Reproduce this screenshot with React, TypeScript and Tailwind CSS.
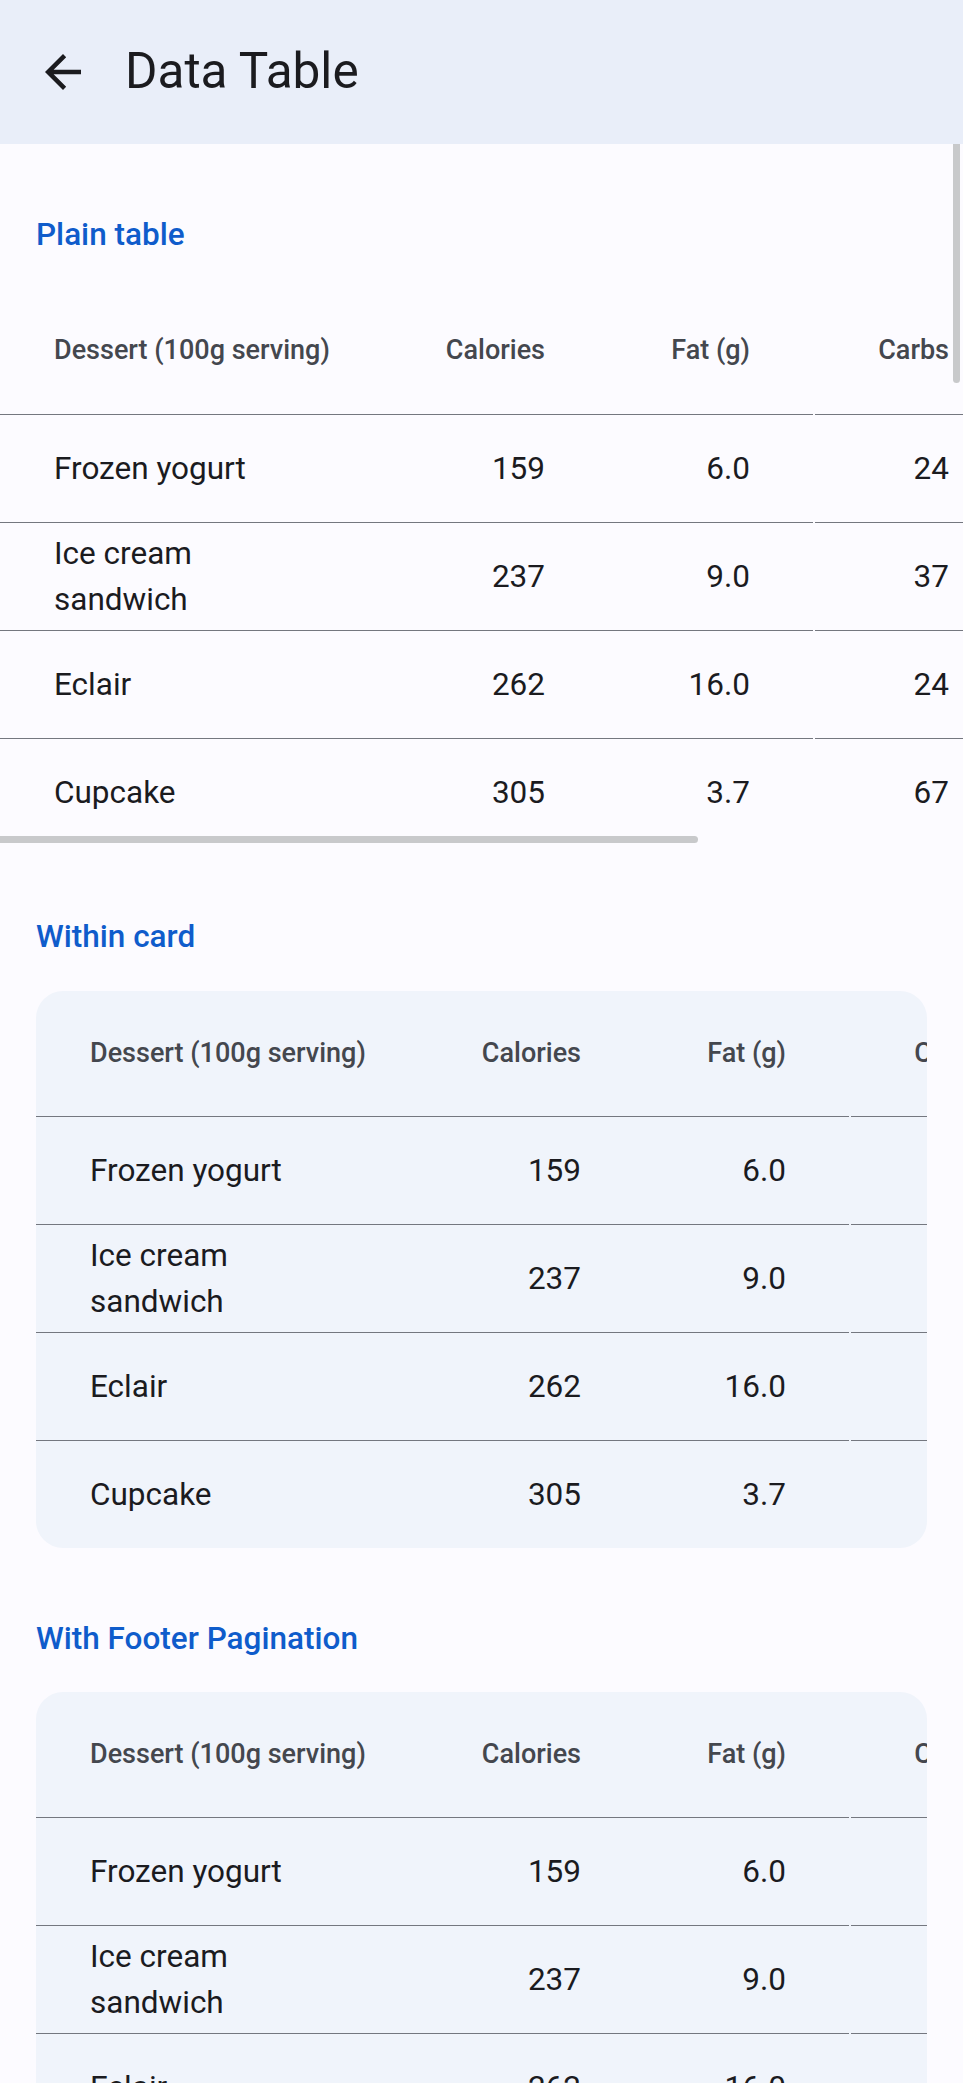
import React from "react";

// デザートのデータ
interface Dessert {
  name: string;
  calories: number;
  fat: string;
  carbs: number;
  protein: string;
}

const desserts: Dessert[] = [
  { name: "Frozen yogurt", calories: 159, fat: "6.0", carbs: 24, protein: "4.0" },
  { name: "Ice cream sandwich", calories: 237, fat: "9.0", carbs: 37, protein: "4.3" },
  { name: "Eclair", calories: 262, fat: "16.0", carbs: 24, protein: "6.0" },
  { name: "Cupcake", calories: 305, fat: "3.7", carbs: 67, protein: "4.3" },
];

// 列ごとのセル幅・余白
const cell = [
  "w-[392px] pl-[54px] pr-[63px] justify-start",
  "w-[216px] pr-[63px] justify-end",
  "w-[205px] pr-[63px] mr-[2px] justify-end",
  "w-[197px] pl-[62px] pr-[63px] justify-end",
  "w-[316px] pl-[63px] pr-[54px] justify-end",
];

const headers = ["Dessert (100g serving)", "Calories", "Fat (g)", "Carbs", "Protein (g)"];

const Table: React.FC<{ headerClass: string }> = ({ headerClass }) => (
  <div className="w-[1328px] shrink-0">
    {/* 見出し行 */}
    <div className={`flex ${headerClass}`}>
      {headers.map((h, i) => (
        <div key={h} className={`flex shrink-0 items-center ${cell[i]}`}>
          <span className="whitespace-nowrap text-[27px] font-medium text-[#44474e]">{h}</span>
        </div>
      ))}
    </div>
    {desserts.map((d) => {
      const vals = [d.name, String(d.calories), d.fat, String(d.carbs), d.protein];
      return (
        <div key={d.name} className="flex h-[108px]">
          {vals.map((v, i) => (
            <div key={i} className={`flex shrink-0 items-center border-t border-[#74777f] ${cell[i]}`}>
              <span className={`text-[31.5px] leading-[46px] text-[#1b1b1f] ${i === 0 ? "text-left" : "text-right"}`}>{v}</span>
            </div>
          ))}
        </div>
      );
    })}
  </div>
);

const SectionTitle: React.FC<{ children: React.ReactNode }> = ({ children }) => (
  <h2 className="h-[45px] pl-[36px] text-[31.5px] font-medium leading-[45px] text-[#0f5ccb]">{children}</h2>
);

export default function App() {
  return (
    <div className="relative h-[2083px] w-[963px] overflow-hidden bg-[#fcfbff] font-[family-name:Roboto,sans-serif]">
      {/* アプリバー */}
      <header className="flex h-[144px] items-center bg-[#e9eef9] pl-[36px]">
        <svg width="54" height="54" viewBox="0 0 24 24" fill="#1b1b1f">
          <path d="M20 11H7.83l5.59-5.59L12 4l-8 8 8 8 1.41-1.41L7.83 13H20v-2z" />
        </svg>
        <h1 className="ml-[35px] text-[49.5px] leading-none text-[#1b1b1f]">Data Table</h1>
      </header>

      {/* ページのスクロールバー */}
      <div className="absolute left-[953px] top-[144px] h-[239px] w-[7px] rounded-b-full bg-[#c8c9cb]" />

      {/* Plain table */}
      <section className="pt-[68px]">
        <SectionTitle>Plain table</SectionTitle>
        <div className="relative mt-[30px] w-[963px] overflow-hidden">
          <Table headerClass="h-[127px]" />
          <div className="absolute bottom-[3px] left-0 h-[7px] w-[698px] rounded-r-full bg-[#c8c9cb]" />
        </div>
      </section>

      {/* Within card */}
      <section className="pt-[68px]">
        <SectionTitle>Within card</SectionTitle>
        <div className="ml-[36px] mt-[32px] w-[891px] overflow-hidden rounded-[27px] bg-[#f0f4fb]">
          <Table headerClass="h-[125px]" />
        </div>
      </section>

      {/* With Footer Pagination */}
      <section className="pt-[68px]">
        <SectionTitle>With Footer Pagination</SectionTitle>
        <div className="ml-[36px] mt-[31px] w-[891px] overflow-hidden rounded-[27px] bg-[#f0f4fb]">
          <Table headerClass="h-[125px]" />
        </div>
      </section>
    </div>
  );
}
